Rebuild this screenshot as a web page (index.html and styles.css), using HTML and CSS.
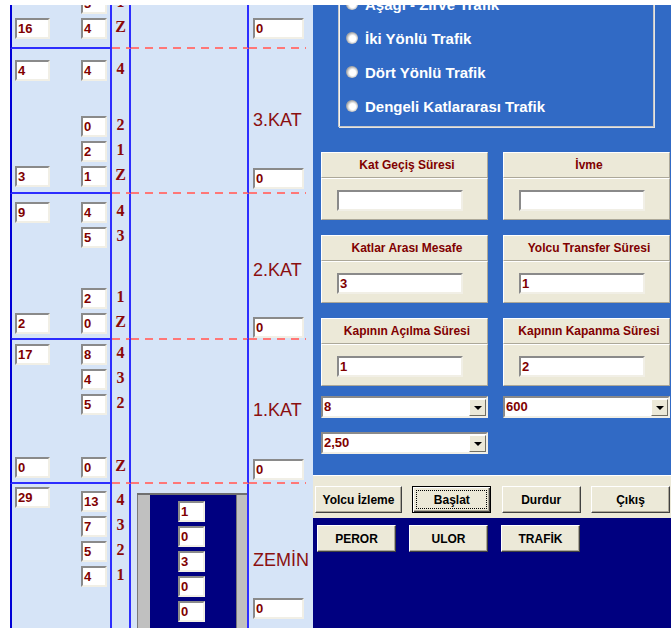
FILE: index.html
```html
<!DOCTYPE html>
<html lang="tr">
<head>
<meta charset="utf-8">
<title>Asansör Simülasyonu</title>
<link rel="stylesheet" href="styles.css">
</head>
<body>
<div class="app">
  <!-- building: one row per floor, waiting passengers on the left, shaft in the middle -->
  <div class="building">
    <section class="floor floor-4">
      <div class="calls">
        <div class="spacer"></div>
        <div class="row"><span class="slot"></span><span class="field small">3</span></div>
        <div class="row"><span class="field wide">16</span><span class="field small">4</span></div>
      </div>
      <div class="marks">
        <div class="spacer"></div>
        <span class="mark">1</span>
        <span class="mark">Z</span>
      </div>
      <div class="shaft"></div>
      <div class="side">
        <span class="floor-name"></span>
        <span class="field out">0</span>
      </div>
    </section>

    <section class="floor floor-3">
      <div class="calls">
        <div class="row"><span class="field wide">4</span><span class="field small">4</span></div>
        <div class="spacer"></div>
        <div class="row"><span class="slot"></span><span class="field small">0</span></div>
        <div class="row"><span class="slot"></span><span class="field small">2</span></div>
        <div class="row"><span class="field wide">3</span><span class="field small">1</span></div>
      </div>
      <div class="marks">
        <span class="mark">4</span>
        <div class="spacer"></div>
        <span class="mark">2</span>
        <span class="mark">1</span>
        <span class="mark">Z</span>
      </div>
      <div class="shaft"></div>
      <div class="side">
        <span class="floor-name">3.KAT</span>
        <span class="field out">0</span>
      </div>
    </section>

    <section class="floor floor-2">
      <div class="calls">
        <div class="row"><span class="field wide">9</span><span class="field small">4</span></div>
        <div class="row"><span class="slot"></span><span class="field small">5</span></div>
        <div class="spacer"></div>
        <div class="row"><span class="slot"></span><span class="field small">2</span></div>
        <div class="row"><span class="field wide">2</span><span class="field small">0</span></div>
      </div>
      <div class="marks">
        <span class="mark">4</span>
        <span class="mark">3</span>
        <div class="spacer"></div>
        <span class="mark">1</span>
        <span class="mark">Z</span>
      </div>
      <div class="shaft"></div>
      <div class="side">
        <span class="floor-name">2.KAT</span>
        <span class="field out">0</span>
      </div>
    </section>

    <section class="floor floor-1">
      <div class="calls">
        <div class="row"><span class="field wide">17</span><span class="field small">8</span></div>
        <div class="row"><span class="slot"></span><span class="field small">4</span></div>
        <div class="row"><span class="slot"></span><span class="field small">5</span></div>
        <div class="spacer"></div>
        <div class="row"><span class="field wide">0</span><span class="field small">0</span></div>
      </div>
      <div class="marks">
        <span class="mark">4</span>
        <span class="mark">3</span>
        <span class="mark">2</span>
        <div class="spacer"></div>
        <span class="mark">Z</span>
      </div>
      <div class="shaft"></div>
      <div class="side">
        <span class="floor-name">1.KAT</span>
        <span class="field out">0</span>
      </div>
    </section>

    <section class="floor floor-0">
      <div class="calls">
        <div class="row"><span class="field wide raised">29</span><span class="field small">13</span></div>
        <div class="row"><span class="slot"></span><span class="field small">7</span></div>
        <div class="row"><span class="slot"></span><span class="field small">5</span></div>
        <div class="row"><span class="slot"></span><span class="field small">4</span></div>
        <div class="spacer"></div>
      </div>
      <div class="marks">
        <span class="mark">4</span>
        <span class="mark">3</span>
        <span class="mark">2</span>
        <span class="mark">1</span>
        <div class="spacer"></div>
      </div>
      <div class="shaft">
        <div class="car">
          <div class="rail"></div>
          <div class="cabin">
            <span class="field load">1</span>
            <span class="field load">0</span>
            <span class="field load">3</span>
            <span class="field load">0</span>
            <span class="field load">0</span>
          </div>
          <div class="rail"></div>
        </div>
      </div>
      <div class="side">
        <span class="floor-name">ZEMİN</span>
        <span class="field out">0</span>
      </div>
    </section>
  </div>

  <!-- simulation settings -->
  <div class="controls">
    <div class="settings">
      <div class="traffic">
        <div class="option"><span class="radio"></span>Aşağı - Zirve Trafik</div>
        <div class="option"><span class="radio"></span>İki Yönlü Trafik</div>
        <div class="option"><span class="radio"></span>Dört Yönlü Trafik</div>
        <div class="option"><span class="radio"></span>Dengeli Katlararası Trafik</div>
      </div>

      <div class="params">
        <div class="param">
          <div class="param-head">Kat Geçiş Süresi</div>
          <div class="param-body"><span class="field value"></span></div>
        </div>
        <div class="param">
          <div class="param-head">İvme</div>
          <div class="param-body"><span class="field value"></span></div>
        </div>
        <div class="param">
          <div class="param-head">Katlar Arası Mesafe</div>
          <div class="param-body"><span class="field value">3</span></div>
        </div>
        <div class="param">
          <div class="param-head">Yolcu Transfer Süresi</div>
          <div class="param-body"><span class="field value">1</span></div>
        </div>
        <div class="param">
          <div class="param-head">Kapının Açılma Süresi</div>
          <div class="param-body"><span class="field value">1</span></div>
        </div>
        <div class="param">
          <div class="param-head">Kapının Kapanma Süresi</div>
          <div class="param-body"><span class="field value">2</span></div>
        </div>
      </div>

      <div class="selects">
        <div class="combo"><span class="combo-value">8</span><span class="combo-arrow"></span></div>
        <div class="combo"><span class="combo-value">600</span><span class="combo-arrow"></span></div>
        <div class="combo"><span class="combo-value">2,50</span><span class="combo-arrow"></span></div>
      </div>
    </div>

    <div class="toolbar">
      <button class="btn btn-wide">Yolcu İzleme</button>
      <button class="btn btn-default"><span class="caption">Başlat</span></button>
      <button class="btn">Durdur</button>
      <button class="btn">Çıkış</button>
    </div>

    <div class="extra">
      <button class="btn">PEROR</button>
      <button class="btn">ULOR</button>
      <button class="btn">TRAFİK</button>
    </div>
  </div>
</div>
</body>
</html>
```

FILE: styles.css
```css
* { box-sizing: border-box; }

html, body {
  margin: 0;
  background: #fff;
}

body {
  font-family: "Liberation Sans", Arial, sans-serif;
}

.app {
  display: flex;
  height: 623px;
  margin: 5px 0 0 10px;
  overflow: hidden;
}

/* ---------- building ---------- */

.building {
  width: 303px;
  flex: none;
  display: flex;
  flex-direction: column;
  background: #d6e4f7;
}

.floor {
  flex: none;
  height: 145px;
  display: grid;
  grid-template-columns: 102px 19px 118px 64px;
}

.floor-4 { margin-top: -101px; --rows-top: 0px;  --rows-bottom: 8px; --name-top: 61px; --out-gap: 33px; }
.floor-3 { --rows-top: 11px; --rows-bottom: 5px; --name-top: 61px; --out-gap: 38px; }
.floor-2 { --rows-top: 8px;  --rows-bottom: 4px; --name-top: 66px; --out-gap: 37px; }
.floor-1 { --rows-top: 5px;  --rows-bottom: 4px; --name-top: 61px; --out-gap: 39px; }
.floor-0 { --rows-top: 7px;  --rows-bottom: 0px; --name-top: 66px; --out-gap: 28px; }

.calls,
.marks {
  display: flex;
  flex-direction: column;
  gap: 4px;
  padding-top: var(--rows-top);
  padding-bottom: var(--rows-bottom);
}

.calls {
  padding-left: 3px;
  padding-right: 3px;
  border-left: 2px solid #0000d6;
  border-right: 2px solid #2d2dff;
  border-bottom: 2px solid #2d2dff;
}

.spacer { flex: 1; }

.row {
  flex: none;
  height: 21px;
  display: flex;
  justify-content: space-between;
}

.slot { width: 35px; }

/* dashed floor line through the shaft columns */
.marks,
.shaft,
.side {
  border-bottom: 2px solid transparent;
  background: repeating-linear-gradient(90deg, #ff7777 0 8px, transparent 8px 14px) left bottom / 100% 2px no-repeat border-box;
}

.marks,
.shaft {
  border-right: 2px solid #2d2dff;
}

.side {
  background-size: 57px 2px;
  display: flex;
  flex-direction: column;
  align-items: flex-start;
  padding-left: 4px;
}

.mark {
  flex: none;
  height: 21px;
  line-height: 23px;
  text-align: center;
  font: bold 16px "Liberation Serif", "Times New Roman", serif;
  color: #8b0a0a;
}

.floor-name {
  margin-top: var(--name-top);
  height: 20px;
  line-height: 20px;
  font-size: 18px;
  color: #8b1010;
  white-space: nowrap;
}

/* sunken text boxes */
.field {
  display: block;
  flex: none;
  height: 21px;
  padding-left: 1px;
  background: #fff;
  border: 2px solid;
  border-color: #8a8a8a #f1efe6 #f1efe6 #8a8a8a;
  font: bold 13px/18px "Liberation Sans", Arial, sans-serif;
  color: #800000;
  overflow: hidden;
}

.field.wide  { width: 35px; }
.field.small { width: 26px; }
.field.out   { width: 51px; margin-top: var(--out-gap); }
.field.load  { width: 27px; }
.field.value { width: 126px; }
.field.raised { margin-top: -4px; }

/* elevator car */
.car {
  margin: 9px 0 0 6px;
  height: 140px;
  display: grid;
  grid-template-columns: 13px 86px 11px;
  border-top: 2px solid #6f6f6f;
}

.rail {
  background: #c0c0c0;
  border-left: 1px solid #7a7a7a;
}

.cabin {
  background: #000080;
  display: flex;
  flex-direction: column;
  gap: 4px;
  padding: 6px 0 0 28px;
}

/* ---------- controls ---------- */

.controls {
  flex: 1;
  display: flex;
  flex-direction: column;
}

.settings {
  flex: none;
  height: 470px;
  background: #316ac5;
  display: flex;
  flex-direction: column;
}

.traffic {
  margin: -30px 17px 0 25px;
  padding: 11px 0 3px 7px;
  border: 1px solid #c6c6c6;
  box-shadow: inset 1px 1px 0 #f4f4f4, 1px 1px 0 #e4e4e4;
}

.option {
  height: 34px;
  display: flex;
  align-items: center;
  gap: 7px;
  color: #fff;
  font-size: 15px;
  font-weight: bold;
  white-space: nowrap;
}

.radio {
  flex: none;
  width: 12px;
  height: 12px;
  border-radius: 50%;
  background: radial-gradient(circle at 55% 55%, #fff 0 3px, #e6e6e6 4px, #a8a8a8 6px);
}

.params {
  display: grid;
  grid-template-columns: 167px 167px;
  gap: 15px;
  margin: 25px 0 0 8px;
}

.param-head,
.param-body {
  background: #ece9d8;
  border: 1px solid;
  border-color: #fff #aca899 #aca899 #fff;
}

.param-head {
  height: 26px;
  display: flex;
  align-items: center;
  justify-content: center;
  padding-left: 5px;
  font-size: 12px;
  font-weight: bold;
  color: #800000;
  white-space: nowrap;
}

.param-body {
  height: 42px;
  padding: 11px 0 0 15px;
}

.selects {
  display: grid;
  grid-template-columns: 167px 167px;
  column-gap: 15px;
  row-gap: 14px;
  margin: 10px 0 0 8px;
}

.combo {
  height: 22px;
  display: flex;
  background: #fff;
  border: 2px solid;
  border-color: #8a8a8a #f1efe6 #f1efe6 #8a8a8a;
}

.combo-value {
  flex: 1;
  padding-left: 1px;
  font: bold 13px/18px "Liberation Sans", Arial, sans-serif;
  color: #800000;
}

.combo-arrow {
  flex: none;
  width: 17px;
  margin: 1px 0 0 0;
  background: #ece9d8;
  border: 1px solid;
  border-color: #fff #716f64 #716f64 #fff;
  display: flex;
  align-items: center;
  justify-content: center;
}

.combo-arrow::before {
  content: "";
  border-top: 4px solid #000;
  border-left: 4px solid transparent;
  border-right: 4px solid transparent;
}

/* ---------- buttons ---------- */

.toolbar {
  flex: none;
  height: 43px;
  background: #ece9d8;
  border-top: 1px solid #fff;
  display: flex;
  justify-content: space-between;
  align-items: flex-start;
  padding: 10px 1px 0 2px;
}

.btn {
  width: 79px;
  height: 27px;
  padding: 0;
  background: #ece9d8;
  border: 1px solid;
  border-color: #fff #404040 #404040 #fff;
  box-shadow: inset -1px -1px 0 #aca899;
  display: flex;
  align-items: center;
  justify-content: center;
  font: bold 12px "Liberation Sans", Arial, sans-serif;
  color: #000;
}

.btn-wide { width: 87px; }

.btn-default {
  border-color: #000;
  box-shadow: inset 1px 1px 0 #fff, inset -1px -1px 0 #404040, inset -2px -2px 0 #aca899;
}

.btn-default .caption {
  flex: 1;
  align-self: stretch;
  margin: 3px;
  border: 1px dotted #000;
  display: flex;
  align-items: center;
  justify-content: center;
}

.extra {
  flex: 1;
  background: #000080;
  display: flex;
  align-items: flex-start;
  gap: 13px;
  padding: 7px 0 0 4px;
}
```
